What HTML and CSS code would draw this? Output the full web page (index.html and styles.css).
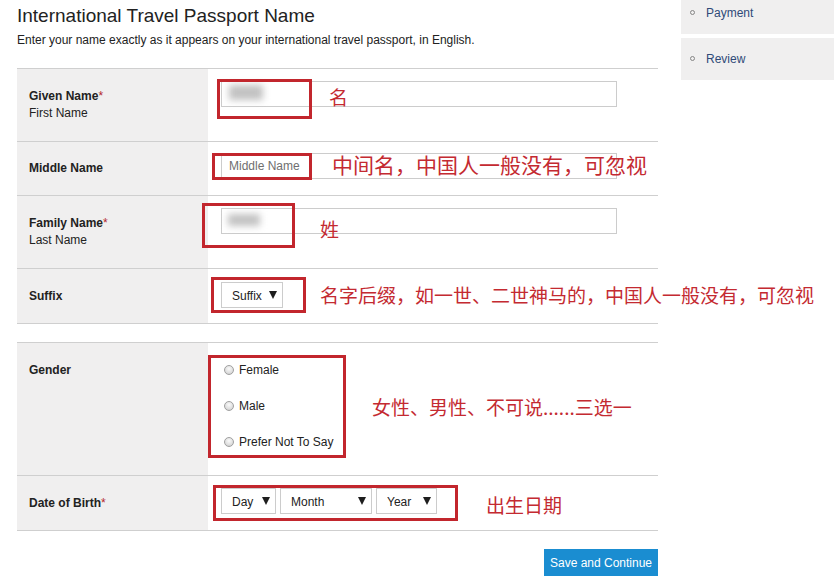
FILE: index.html
```html
<!DOCTYPE html>
<html lang="en">
<head>
<meta charset="utf-8">
<title>International Travel Passport Name</title>
<link rel="stylesheet" href="styles.css">
</head>
<body>
<div class="page">
  <main class="main">
    <h1 class="title">International Travel Passport Name</h1>
    <p class="lead">Enter your name exactly as it appears on your international travel passport, in English.</p>

    <section class="fields fields-name">
      <div class="row row-tall">
        <div class="label"><span class="lbl">Given Name<span class="req">*</span></span><span class="sub">First Name</span></div>
        <div class="value">
          <div class="input-wrap"><input class="text-input" type="text" aria-label="Given Name"><span class="blur"></span></div>
          <span class="mark mark-given"></span>
          <span class="note note-given">名</span>
        </div>
      </div>
      <div class="row row-mid">
        <div class="label"><span class="lbl">Middle Name</span></div>
        <div class="value value-mid">
          <input class="text-input" type="text" placeholder="Middle Name" aria-label="Middle Name">
          <span class="mark mark-middle"></span>
          <span class="note note-middle">中间名，中国人一般没有，可忽视</span>
        </div>
      </div>
      <div class="row row-tall">
        <div class="label"><span class="lbl">Family Name<span class="req">*</span></span><span class="sub">Last Name</span></div>
        <div class="value">
          <div class="input-wrap"><input class="text-input" type="text" aria-label="Family Name"><span class="blur blur-family"></span></div>
          <span class="mark mark-family"></span>
          <span class="note note-family">姓</span>
        </div>
      </div>
      <div class="row row-single">
        <div class="label"><span class="lbl">Suffix</span></div>
        <div class="value value-suffix">
          <div class="select select-suffix"><select aria-label="Suffix"><option>Suffix</option></select></div>
          <span class="mark mark-suffix"></span>
          <span class="note note-suffix">名字后缀，如一世、二世神马的，中国人一般没有，可忽视</span>
        </div>
      </div>
    </section>

    <section class="fields fields-bio">
      <div class="row row-gender">
        <div class="label label-top"><span class="lbl">Gender</span></div>
        <div class="value value-gender">
          <div class="radio-list">
            <label class="radio"><input class="radio-input" type="radio" name="gender">Female</label>
            <label class="radio"><input class="radio-input" type="radio" name="gender">Male</label>
            <label class="radio"><input class="radio-input" type="radio" name="gender">Prefer Not To Say</label>
          </div>
          <span class="mark mark-gender"></span>
          <span class="note note-gender">女性、男性、不可说......三选一</span>
        </div>
      </div>
      <div class="row row-single">
        <div class="label"><span class="lbl">Date of Birth<span class="req">*</span></span></div>
        <div class="value">
          <div class="dob">
            <div class="select select-day"><select aria-label="Day"><option>Day</option></select></div>
            <div class="select select-month"><select aria-label="Month"><option>Month</option></select></div>
            <div class="select select-year"><select aria-label="Year"><option>Year</option></select></div>
          </div>
          <span class="mark mark-dob"></span>
          <span class="note note-dob">出生日期</span>
        </div>
      </div>
    </section>

    <div class="actions"><button class="btn" type="button">Save and Continue</button></div>
  </main>

  <aside class="side">
    <div class="side-item"><span class="bullet"></span><span>Payment</span></div>
    <div class="side-item"><span class="bullet"></span><span>Review</span></div>
  </aside>
</div>
</body>
</html>
```

FILE: styles.css
```css
* {
  box-sizing: border-box;
}

html, body {
  margin: 0;
  background: #fff;
}

body {
  font-family: "Liberation Sans", Arial, sans-serif;
  font-size: 12px;
  color: #222;
  overflow: hidden;
}

.page {
  display: flex;
  align-items: flex-start;
}

.main {
  flex: none;
  width: 641px;
  margin-left: 17px;
}

.title {
  margin: 5px 0 0;
  font-size: 19px;
  line-height: 22px;
  font-weight: normal;
  color: #222;
}

.lead {
  margin: 6px 0 0;
  line-height: 15px;
}

.fields {
  border-top: 1px solid #cfcfcf;
}

.fields-name {
  margin-top: 20px;
}

.fields-bio {
  margin-top: 18px;
}

.row {
  display: grid;
  grid-template-columns: 191px 1fr;
  border-bottom: 1px solid #cfcfcf;
}

.row-tall { height: 73px; }
.row-mid { height: 54px; }
.row-single { height: 55px; }
.row-gender { height: 133px; }

.label {
  background: #f0efef;
  padding-left: 12px;
  display: flex;
  flex-direction: column;
  justify-content: center;
  line-height: 17px;
}

.label-top {
  justify-content: flex-start;
  padding-top: 20px;
  line-height: 15px;
}

.lbl {
  font-weight: bold;
}

.req {
  color: #b3262c;
  font-weight: normal;
}

.value {
  position: relative;
  padding: 12px 0 0 13px;
}

.value-mid {
  padding-top: 11px;
}

.value-suffix {
  padding-top: 13px;
}

.value-gender {
  padding: 20px 0 0 16px;
}

.input-wrap {
  position: relative;
  width: 396px;
}

.text-input {
  display: block;
  width: 396px;
  height: 26px;
  margin: 0;
  padding: 0 7px;
  border: 1px solid #cccccc;
  border-radius: 0;
  background: #fff;
  font: 12px "Liberation Sans", Arial, sans-serif;
  color: #222;
  outline: none;
}

.text-input::placeholder {
  color: #6f6f6f;
}

.blur {
  position: absolute;
  left: 8px;
  top: 4px;
  width: 34px;
  height: 15px;
  background: #c2c2c2;
  filter: blur(3.5px);
}

.blur-family {
  left: 7px;
  top: 6px;
  width: 32px;
  height: 12px;
}

.select {
  position: relative;
  height: 26px;
  border: 1px solid #cccccc;
  background: #fff;
}

.select select {
  appearance: none;
  -webkit-appearance: none;
  display: block;
  width: 100%;
  height: 100%;
  margin: 0;
  padding: 2px 0 0 10px;
  border: 0;
  border-radius: 0;
  background: transparent;
  font: 12px "Liberation Sans", Arial, sans-serif;
  color: #222;
  outline: none;
}

.select::after {
  content: "";
  position: absolute;
  right: 5px;
  top: 8px;
  border-left: 4px solid transparent;
  border-right: 4px solid transparent;
  border-top: 8px solid #1e1e1e;
  pointer-events: none;
}

.select-suffix { width: 62px; }
.select-day { width: 55px; }
.select-month { width: 92px; }
.select-year { width: 61px; }

.select-month::after,
.select-year::after {
  right: 5px;
}

.dob {
  display: flex;
  gap: 4px;
}

.radio-list {
  display: flex;
  flex-direction: column;
  gap: 21px;
}

.radio {
  display: flex;
  align-items: center;
  gap: 5px;
  line-height: 15px;
  color: #222;
}

.radio-input {
  appearance: none;
  -webkit-appearance: none;
  width: 10px;
  height: 10px;
  margin: 0 0 2px;
  border: 1px solid #a0a0a0;
  border-radius: 50%;
  background: radial-gradient(circle at 50% 35%, #fafafa 0%, #dcdcdc 65%, #c4c4c4 100%);
}

.mark {
  position: absolute;
  border: 3px solid #c2262d;
}

.mark-given { left: 9px; top: 10px; width: 95px; height: 40px; }
.mark-middle { left: 4px; top: 11px; width: 100px; height: 27px; }
.mark-family { left: -6px; top: 7px; width: 93px; height: 45px; }
.mark-suffix { left: 3px; top: 8px; width: 95px; height: 36px; }
.mark-gender { left: 0; top: 12px; width: 138px; height: 103px; }
.mark-dob { left: 5px; top: 9px; width: 245px; height: 36px; }

.note {
  position: absolute;
  white-space: nowrap;
  font-family: "Noto Sans CJK SC", "Noto Sans CJK JP", sans-serif;
  font-size: 19px;
  line-height: 19px;
  color: #c42a31;
}

.note-given { left: 121px; top: 18px; }
.note-middle { left: 124px; top: 12px; font-size: 21px; line-height: 21px; }
.note-family { left: 112px; top: 23px; }
.note-suffix { left: 112px; top: 16px; }
.note-gender { left: 164px; top: 54px; }
.note-dob { left: 278px; top: 19px; }

.actions {
  display: flex;
  justify-content: flex-end;
  margin-top: 18px;
}

.btn {
  width: 114px;
  height: 27px;
  padding: 0;
  border: 0;
  background: #1a8dd1;
  color: #fff;
  font: 12px "Liberation Sans", Arial, sans-serif;
}

.side {
  flex: 1;
  margin-left: 23px;
  margin-top: -8px;
  display: flex;
  flex-direction: column;
  gap: 4px;
}

.side-item {
  height: 42px;
  background: #f0efef;
  display: flex;
  align-items: center;
  gap: 11px;
  padding-left: 9px;
  color: #2f4a78;
}

.bullet {
  width: 5px;
  height: 5px;
  border: 1px solid #858585;
  border-radius: 50%;
  margin-top: -1px;
}
```
